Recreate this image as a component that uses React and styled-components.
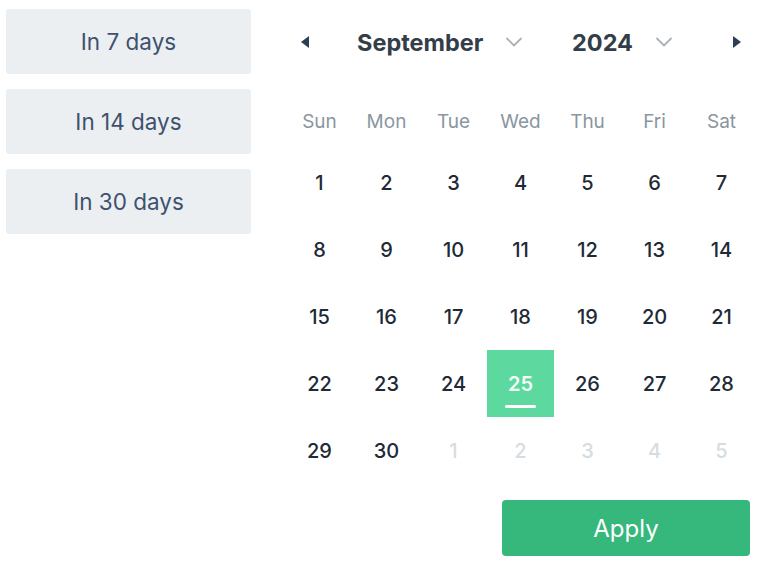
import React from "react";
import styled, { createGlobalStyle } from "styled-components";

const GlobalStyle = createGlobalStyle`
  body {
    margin: 0;
    background: #fff;
    font-family: "Inter", "Lato", sans-serif;
  }
`;

const presets = ["In 7 days", "In 14 days", "In 30 days"];
const weekdays = ["Sun", "Mon", "Tue", "Wed", "Thu", "Fri", "Sat"];

const buildDays = () => {
  const days = [];
  for (let i = 1; i <= 30; i++) days.push({ n: i, muted: false });
  for (let i = 1; i <= 5; i++) days.push({ n: i, muted: true });
  return days;
};

const App = () => {
  const [selected, setSelected] = React.useState(25);
  const days = buildDays();

  return (
    <React.Fragment>
      <GlobalStyle />
      <Wrap>
        <Presets>
          {presets.map((p) => (
            <PresetButton key={p}>{p}</PresetButton>
          ))}
        </Presets>

        <Calendar>
          <Header>
            <ArrowButton>
              <svg width="9" height="12" viewBox="0 0 9 12">
                <path d="M8 0 L0 6 L8 12 Z" fill="#2e3e55" />
              </svg>
            </ArrowButton>
            <Selectors>
              <Select $width="215px">
                <SelectLabel>September</SelectLabel>
                <Chevron />
              </Select>
              <Select>
                <SelectLabel>2024</SelectLabel>
                <Chevron />
              </Select>
            </Selectors>
            <ArrowButton>
              <svg width="9" height="12" viewBox="0 0 9 12">
                <path d="M1 0 L9 6 L1 12 Z" fill="#2e3e55" />
              </svg>
            </ArrowButton>
          </Header>

          <Weekdays>
            {weekdays.map((d) => (
              <Weekday key={d}>{d}</Weekday>
            ))}
          </Weekdays>

          <Days>
            {days.map((d, i) => (
              <Day
                key={i}
                $muted={d.muted}
                $active={!d.muted && d.n === selected}
                onClick={() => !d.muted && setSelected(d.n)}
              >
                {d.n}
              </Day>
            ))}
          </Days>

          <Footer>
            <ApplyButton>Apply</ApplyButton>
          </Footer>
        </Calendar>
      </Wrap>
    </React.Fragment>
  );
};

const Chevron = () => (
  <svg width="18" height="10" viewBox="0 0 18 10">
    <path
      d="M2 1.5 L9 8.5 L16 1.5"
      fill="none"
      stroke="#aab2b8"
      strokeWidth="1.8"
      strokeLinecap="round"
      strokeLinejoin="round"
    />
  </svg>
);

const Wrap = styled.div`
  display: flex;
  flex-direction: row;
  align-items: flex-start;
  padding: 9px 0 0 6px;
  gap: 35px;
`;

const Presets = styled.div`
  display: flex;
  flex-direction: column;
  gap: 15px;
  width: 245px;
`;

const PresetButton = styled.button`
  height: 65px;
  border: none;
  border-radius: 3px;
  background-color: #ebeff1;
  color: #40516f;
  font-family: "Inter", sans-serif;
  font-size: 22.5px;
  cursor: pointer;
  padding: 0;
`;

const Calendar = styled.div`
  display: flex;
  flex-direction: column;
  width: 469px;
`;

const Header = styled.div`
  display: flex;
  align-items: center;
  height: 66px;
`;

const ArrowButton = styled.button`
  display: flex;
  align-items: center;
  justify-content: center;
  width: 38px;
  height: 40px;
  border: none;
  background: transparent;
  padding: 0;
  cursor: pointer;
`;

const Selectors = styled.div`
  display: flex;
  align-items: center;
  flex: 1;
  padding-left: 33px;
`;

const Select = styled.div`
  display: flex;
  align-items: center;
  gap: 22px;
  width: ${(p) => p.$width || "auto"};
  cursor: pointer;
`;

const SelectLabel = styled.span`
  font-size: 23.5px;
  font-weight: 700;
  color: #333e48;
`;

const Weekdays = styled.div`
  display: grid;
  grid-template-columns: repeat(7, 67px);
  height: 40px;
  margin: 26px 0 8px 0;
`;

const Weekday = styled.div`
  display: flex;
  align-items: center;
  justify-content: center;
  font-size: 19px;
  color: #8a96a0;
`;

const Days = styled.div`
  display: grid;
  grid-template-columns: repeat(7, 67px);
  grid-auto-rows: 67px;
`;

const Day = styled.div`
  position: relative;
  display: flex;
  align-items: center;
  justify-content: center;
  font-size: 20px;
  font-weight: ${(p) => (p.$active ? 600 : 500)};
  color: ${(p) => (p.$active ? "#f1fcf6" : p.$muted ? "#d6dde2" : "#1f2a37")};
  background-color: ${(p) => (p.$active ? "#5dd89f" : "transparent")};
  cursor: ${(p) => (p.$muted ? "default" : "pointer")};

  &::after {
    content: "";
    display: ${(p) => (p.$active ? "block" : "none")};
    position: absolute;
    left: 18px;
    right: 18px;
    bottom: 9px;
    height: 3px;
    border-radius: 2px;
    background: #fff;
  }
`;

const Footer = styled.div`
  display: flex;
  justify-content: flex-end;
  margin-top: 16px;
  padding-right: 5px;
`;

const ApplyButton = styled.button`
  width: 248px;
  height: 56px;
  border: none;
  border-radius: 4px;
  background-color: #36b77b;
  color: #fff;
  font-family: "Inter", sans-serif;
  font-size: 24px;
  cursor: pointer;
`;

export default App;
